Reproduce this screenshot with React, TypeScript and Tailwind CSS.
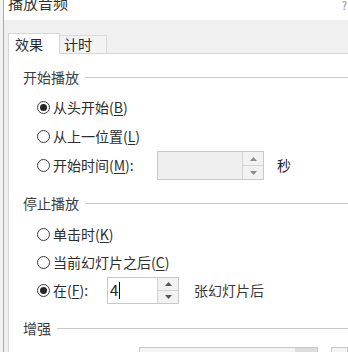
import React from "react"

const font = { fontFamily: '"Noto Sans CJK SC", "Noto Sans", sans-serif' }

function Radio({ checked }: { checked?: boolean }) {
    return (
        <span className="flex h-[13px] w-[13px] shrink-0 items-center justify-center rounded-full border border-[#3a3a3a] bg-white">
            {checked && <span className="h-[7px] w-[7px] rounded-full bg-[#262626]" />}
        </span>
    )
}

function Key({ k }: { k: string }) {
    return (
        <>
            (<span className="underline underline-offset-2">{k}</span>)
        </>
    )
}

function GroupHeader({ label, className = "" }: { label: string; className?: string }) {
    return (
        <div className={`flex h-[20px] items-center pl-[14px] ${className}`}>
            <span className="text-[14px] text-[#3c3c3c]">{label}</span>
            <div className="ml-[6px] h-px flex-1 bg-[#c9c9c9]" />
        </div>
    )
}

function Spinner({ disabled }: { disabled?: boolean }) {
    const arrow = disabled ? "#8a8a8a" : "#555"
    return (
        <div className="flex w-[21px] flex-col border-l border-[#d4d4d4] bg-[#f2f2f2]">
            <div className="flex flex-1 items-center justify-center border-b border-[#d4d4d4]">
                <svg width="7" height="4" viewBox="0 0 7 4">
                    <path d="M0 4 L3.5 0 L7 4 Z" fill={arrow} />
                </svg>
            </div>
            <div className="flex flex-1 items-center justify-center">
                <svg width="7" height="4" viewBox="0 0 7 4">
                    <path d="M0 0 L3.5 4 L7 0 Z" fill={arrow} />
                </svg>
            </div>
        </div>
    )
}

export default function App() {
    return (
        <div className="flex h-[352px] w-[348px] overflow-hidden bg-white text-[#2e2e2e]" style={font}>
            {/* window edge */}
            <div className="w-[3px] shrink-0 bg-[#f3f3f3]" />
            <div className="w-px shrink-0 bg-[#a9a9a9]" />

            <div className="flex flex-1 flex-col">
                {/* Title bar */}
                <div className="flex h-[20px] shrink-0 items-start justify-between bg-white pl-[4px] pr-[1px]">
                    <span className="mt-[-7px] text-[15px] leading-[20px] text-[#333]">播放音频</span>
                    <span className="mt-[-3px] text-[11px] leading-[16px] text-[#888]">?</span>
                </div>

                {/* Body */}
                <div className="flex flex-1 flex-col bg-[#f0f0f0] pl-[4px]">
                    {/* Tabs */}
                    <div className="flex h-[33px] shrink-0 items-end">
                        <div className="relative z-10 mb-[-1px] flex h-[21px] w-[52px] items-center border border-b-0 border-[#d6d6d6] bg-white pl-[6px] text-[14px] text-[#2a2a2a]">
                            效果
                        </div>
                        <div className="flex h-[18px] w-[47px] items-center border-t border-r border-[#dadada] bg-[#f3f3f3] pl-[4px] text-[14px] text-[#2a2a2a]">
                            计时
                        </div>
                    </div>

                    {/* Panel */}
                    <div className="flex flex-1 flex-col border-t border-l border-[#d6d6d6] bg-white">
                        <GroupHeader label="开始播放" className="mt-[13px]" />

                        <div className="mt-[6px] flex h-[29px] items-center pl-[28px]">
                            <Radio checked />
                            <span className="ml-[3px] text-[14px]">从头开始<Key k="B" /></span>
                        </div>
                        <div className="flex h-[29px] items-center pl-[28px]">
                            <Radio />
                            <span className="ml-[3px] text-[14px]">从上一位置<Key k="L" /></span>
                        </div>
                        <div className="flex h-[29px] items-center pl-[28px]">
                            <Radio />
                            <span className="ml-[3px] w-[104px] text-[14px]">开始时间<Key k="M" />:</span>
                            <div className="flex h-[29px] w-[107px] border border-[#c9c9c9] bg-[#efefef]">
                                <div className="flex-1" />
                                <Spinner disabled />
                            </div>
                            <span className="ml-[13px] text-[14px] text-[#222]">秒</span>
                        </div>

                        <GroupHeader label="停止播放" className="mt-[13px]" />

                        <div className="mt-[7px] flex h-[28px] items-center pl-[28px]">
                            <Radio />
                            <span className="ml-[3px] text-[14px]">单击时<Key k="K" /></span>
                        </div>
                        <div className="flex h-[28px] items-center pl-[28px]">
                            <Radio />
                            <span className="ml-[3px] text-[14px]">当前幻灯片之后<Key k="C" /></span>
                        </div>
                        <div className="flex h-[29px] items-center pl-[28px]">
                            <Radio checked />
                            <span className="ml-[3px] w-[54px] text-[14px]">在<Key k="F" />:</span>
                            <div className="flex h-[27px] w-[72px] border border-[#c9c9c9] bg-white">
                                <div className="flex flex-1 items-center pl-[2px]">
                                    <span className="text-[15px] text-[#222]">4</span>
                                    <span className="ml-px h-[17px] w-px bg-[#111]" />
                                </div>
                                <Spinner />
                            </div>
                            <span className="ml-[15px] text-[14px] text-[#3a3a3a]">张幻灯片后</span>
                        </div>

                        <GroupHeader label="增强" className="mt-[13px]" />

                        <div className="mt-[9px] flex h-[20px] items-start">
                            <div className="ml-[130px] flex h-[20px] w-[179px] border border-[#c9c9c9] bg-[#f4f4f4]">
                                <div className="flex-1" />
                                <div className="w-[22px] bg-[#dedede]" />
                            </div>
                            <div className="ml-[13px] h-[20px] flex-1 border border-[#c9c9c9] bg-[#f4f4f4]" />
                        </div>
                    </div>
                </div>
            </div>
        </div>
    )
}
